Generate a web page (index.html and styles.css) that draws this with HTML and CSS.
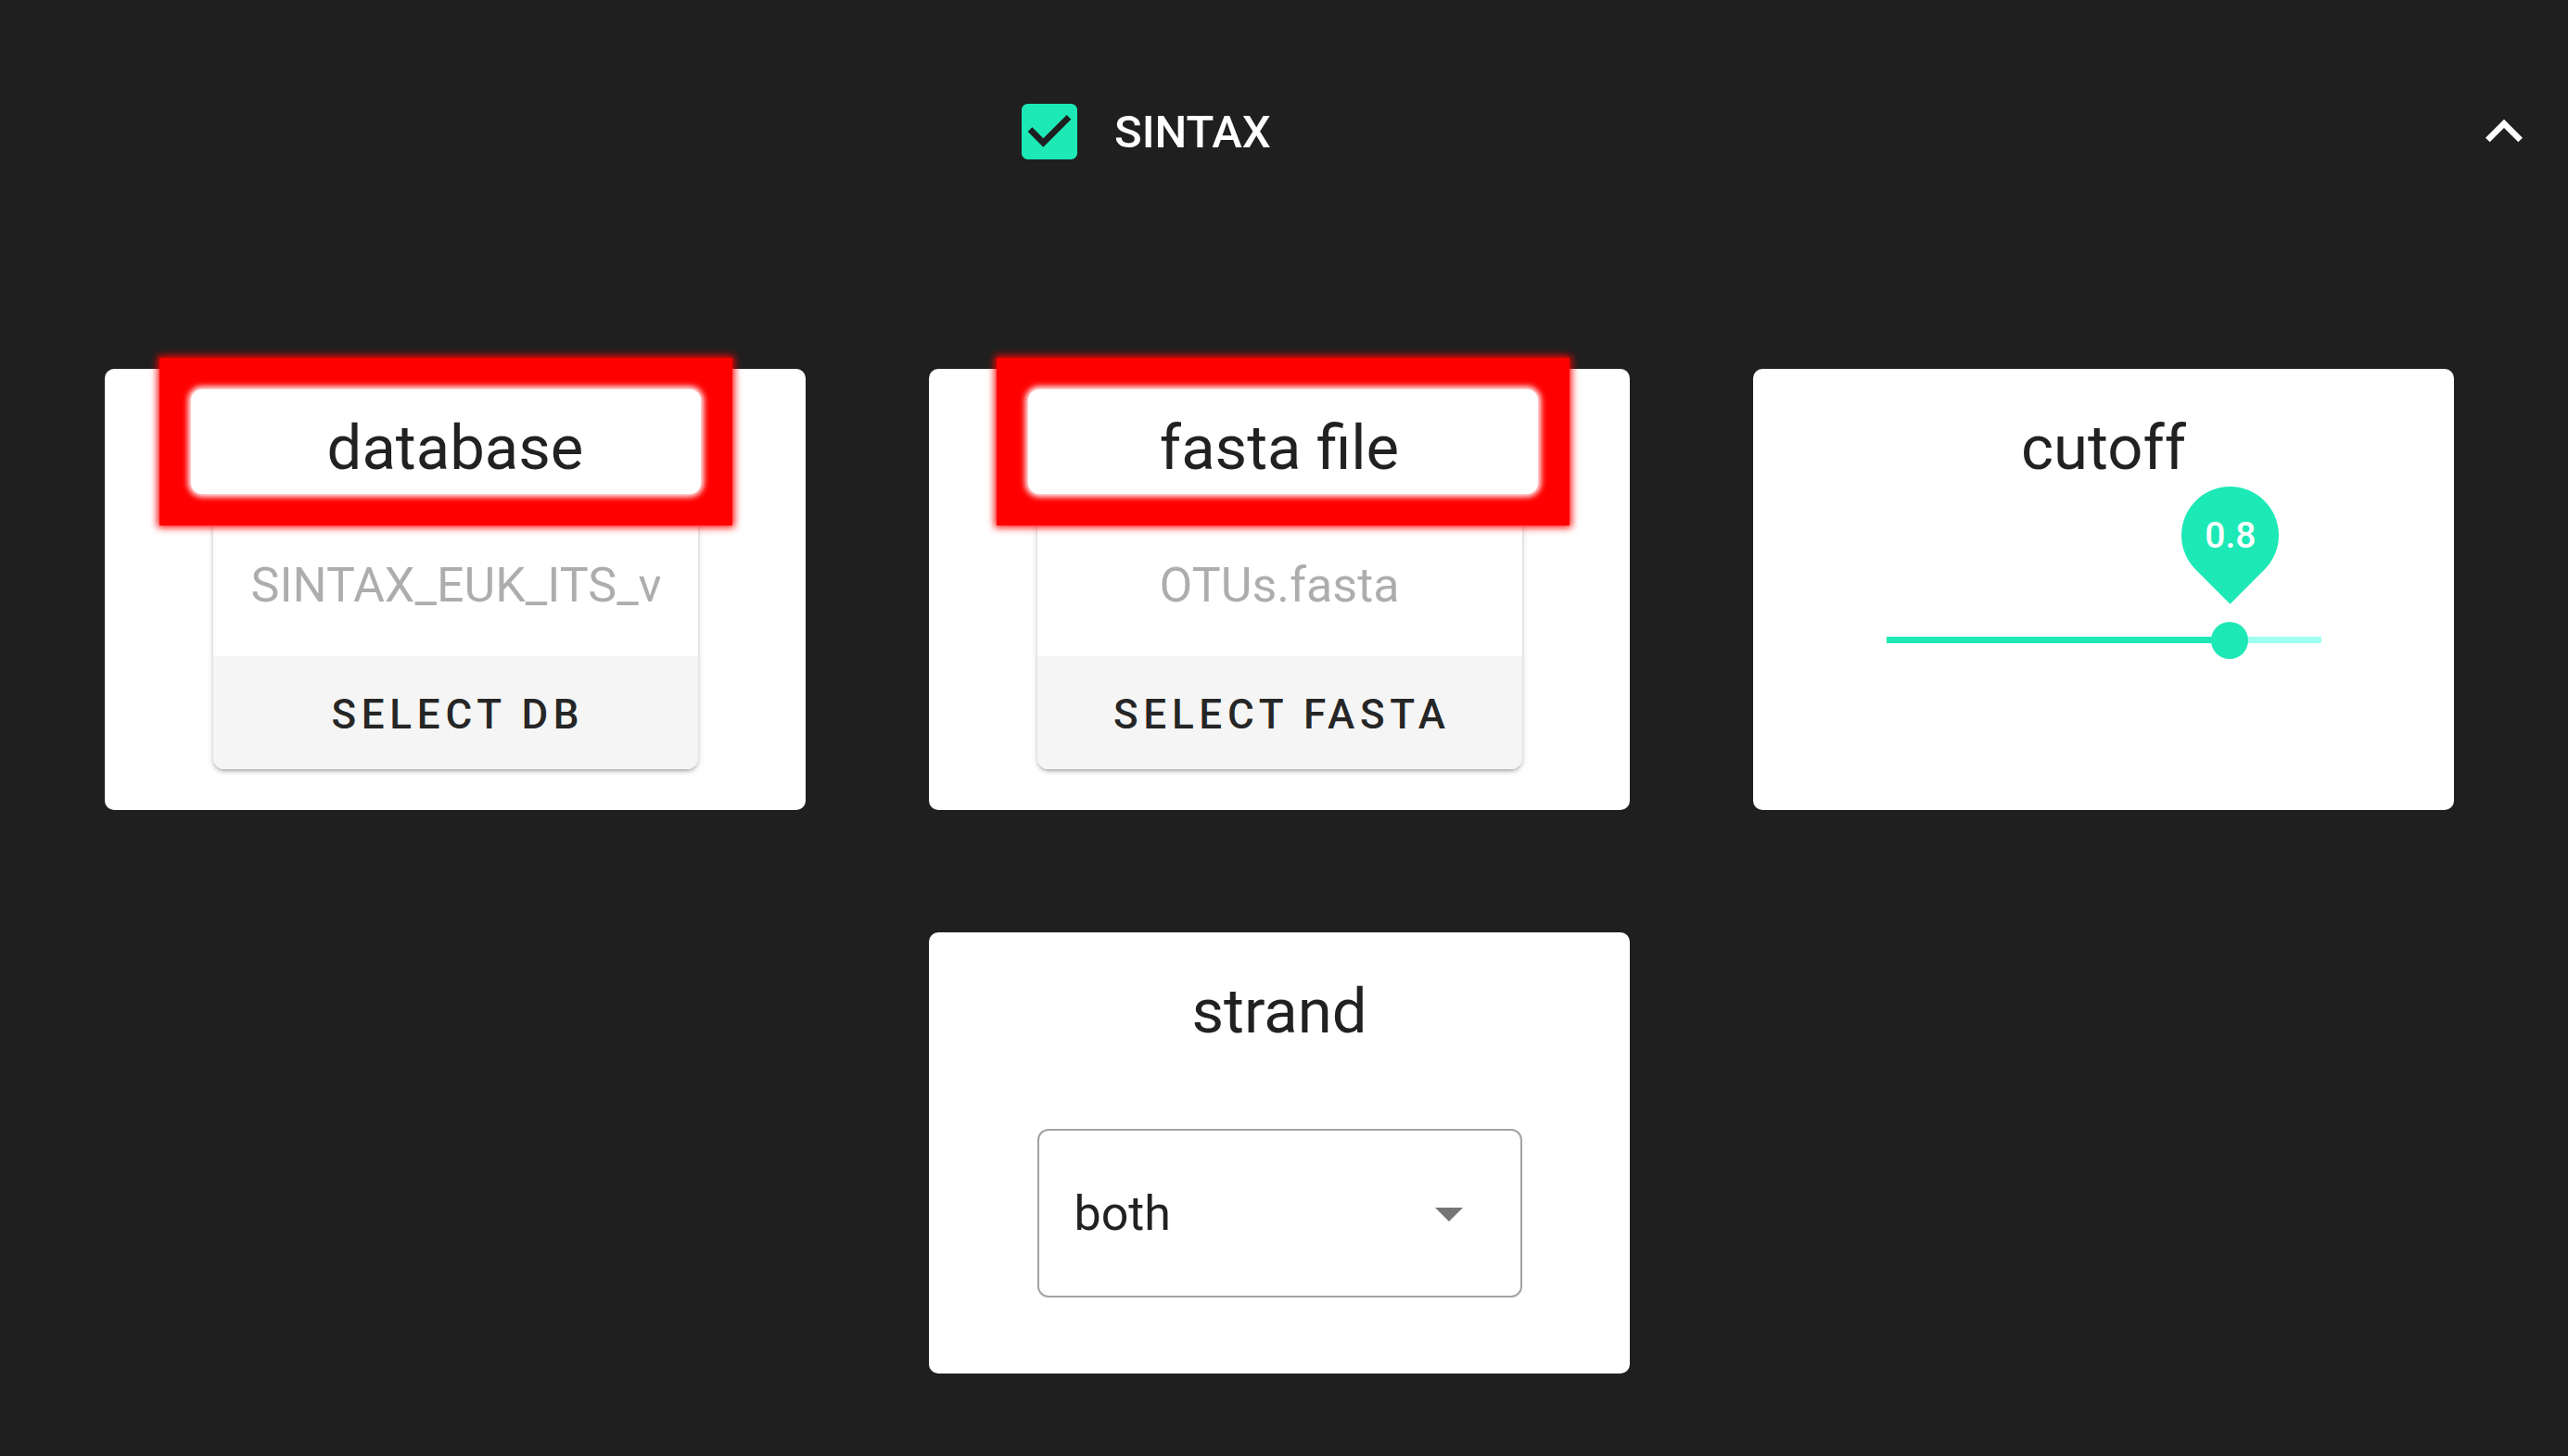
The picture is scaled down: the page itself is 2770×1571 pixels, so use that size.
FILE: index.html
```html
<!DOCTYPE html>
<html>
<head>
<title>SINTAX</title>
<link rel="stylesheet" href="styles.css">
</head>
<body>

<div class="panel-head">
  <svg class="check" viewBox="0 0 24 24"><path d="M19 3H5c-1.11 0-2 .9-2 2v14c0 1.1.89 2 2 2h14c1.11 0 2-.9 2-2V5c0-1.1-.89-2-2-2zm-9 14l-5-5 1.41-1.41L10 14.17l7.59-7.59L19 8l-9 9z"/></svg>
  <span class="panel-title">SINTAX</span>
  <svg class="expand" viewBox="0 0 24 24"><path d="M12 8l-6 6 1.41 1.41L12 10.83l4.59 4.58L18 14z"/></svg>
</div>

<div class="params">

  <div class="card">
    <div class="mark mark-l"><div class="title">database</div></div>
    <div class="file">
      <div class="fname"><span>SINTAX_EUK_ITS_v1.9.fasta</span></div>
      <div class="btn">SELECT DB</div>
    </div>
  </div>

  <div class="card">
    <div class="mark mark-r"><div class="title">fasta file</div></div>
    <div class="file">
      <div class="fname"><span>OTUs.fasta</span></div>
      <div class="btn">SELECT FASTA</div>
    </div>
  </div>

  <div class="card">
    <div class="title">cutoff</div>
    <div class="slider">
      <div class="slider-on" style="width:79%"></div>
      <div class="thumb" style="left:79%">
        <div class="bubble"><span>0.8</span></div>
      </div>
    </div>
  </div>

  <div class="card strand">
    <div class="title">strand</div>
    <div class="select">
      <span>both</span>
      <svg class="arrow" viewBox="0 0 24 24"><path d="M7 10l5 5 5-5z"/></svg>
    </div>
  </div>

</div>

</body>
</html>
```

FILE: styles.css
```css
body{background:#1f1f1f;margin:0;font-family:Roboto,"Noto Sans",sans-serif;}

/* panel header */
.panel-head{display:flex;align-items:center;height:80px;padding:102px 29px 0 1092px;}
.check{width:80px;height:80px;fill:#1de9b6;}
.panel-title{color:#fff;font-size:49px;font-weight:500;margin-left:30px;}
.expand{width:80px;height:80px;fill:#fff;margin-left:auto;}

/* parameter cards */
.params{display:grid;grid-template-columns:repeat(3,756px);grid-auto-rows:476px;gap:132px 133px;padding-left:113px;margin-top:216px;}
.card{background:#fff;border-radius:10px;display:flex;flex-direction:column;align-items:center;}
.strand{grid-column:2;}

.title{width:550px;height:113px;box-sizing:border-box;padding-top:14px;line-height:99px;margin-top:22px;text-align:center;font-size:67px;color:rgba(0,0,0,.87);background:#fff;border-radius:12px;}
.mark{margin:-12px 0 -34px;padding:34px;background:#f00;position:relative;z-index:1;box-shadow:0 0 8px 2px #f00;}
.mark .title{margin:0;box-shadow:0 0 6px 3px #fff;}
.mark-l{margin-left:-20px;}
.mark-l .title{padding-left:20px;}
.mark-r{margin-left:8px;}
.mark-r .title{padding-right:8px;}

/* file pickers */
.file{width:523px;margin-top:10px;border-radius:12px;background:#fff;overflow:hidden;box-shadow:0 3px 3px -2px rgba(0,0,0,.2),0 3px 4px 0 rgba(0,0,0,.14),0 1px 8px 0 rgba(0,0,0,.12);}
.fname{margin:0 41px;padding-top:13px;line-height:152px;font-size:52px;color:rgba(0,0,0,.32);white-space:nowrap;overflow:hidden;text-align:center;}
.btn{height:122px;box-sizing:border-box;padding:5px 0 0 .13em;line-height:117px;background:#f5f5f5;text-align:center;font-size:44px;font-weight:500;letter-spacing:.13em;color:rgba(0,0,0,.87);}

/* slider */
.slider{position:relative;width:469px;height:7px;margin-top:154px;background:#9ffff3;}
.slider-on{height:100%;background:#1de9b6;}
.thumb{position:absolute;top:50%;width:40px;height:40px;margin:-20px 0 0 -20px;border-radius:50%;background:#1de9b6;}
.bubble{position:absolute;left:-32px;top:-146px;width:105px;height:105px;border-radius:50% 50% 50% 0;transform:rotate(-45deg);background:#1de9b6;display:flex;align-items:center;justify-content:center;}
.bubble span{transform:rotate(45deg);color:#fff;font-size:39px;font-weight:500;}

/* select */
.select{width:523px;height:182px;box-sizing:border-box;margin-top:77px;border:2px solid #a3a3a3;border-radius:12px;display:flex;align-items:center;padding-left:38px;font-size:52px;color:rgba(0,0,0,.87);}
.arrow{width:72px;height:72px;fill:rgba(0,0,0,.54);margin-left:auto;margin-right:41px;}
```
